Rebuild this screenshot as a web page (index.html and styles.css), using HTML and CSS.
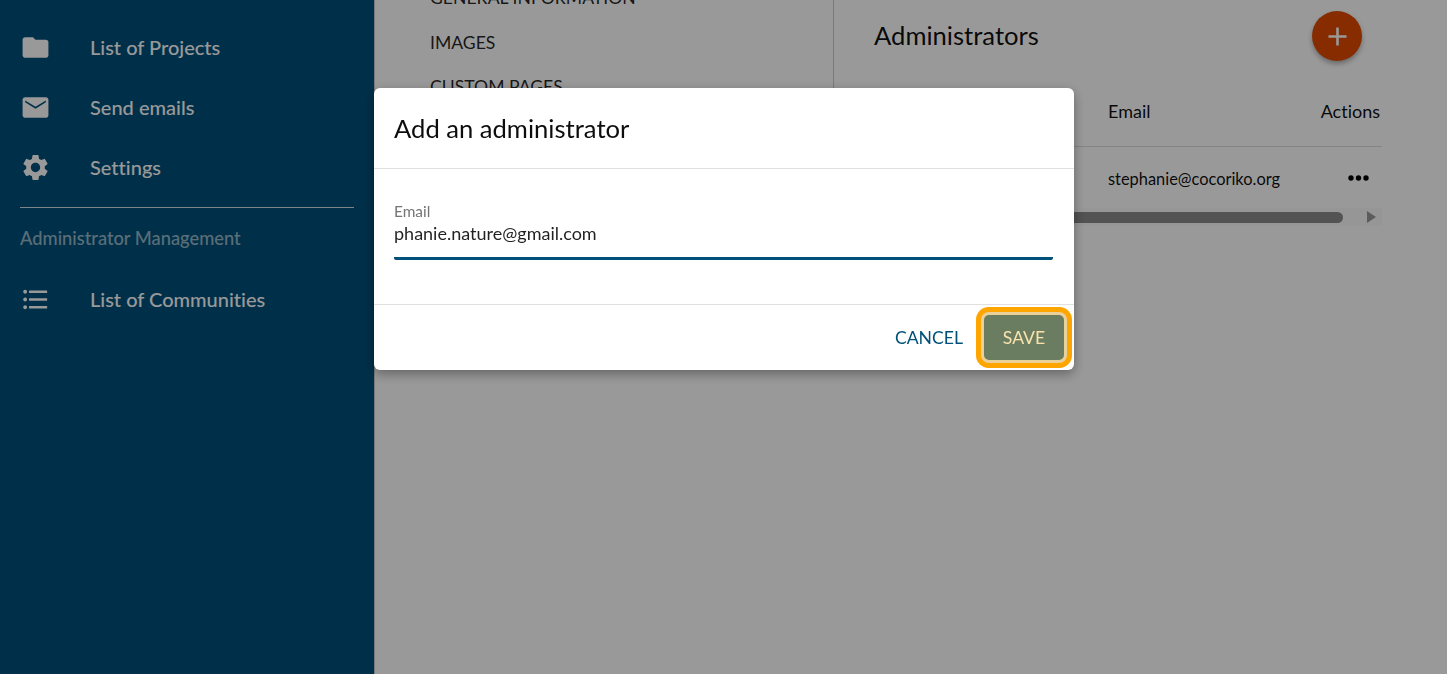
FILE: index.html
```html
<!DOCTYPE html>
<html lang="en">
<head>
    <meta charset="UTF-8">
    <meta name="viewport" content="width=device-width, initial-scale=1.0">
    <title>Add an administrator</title>
    <link rel="stylesheet" href="styles.css">
</head>
<body>
    <div class="layout">
        <nav class="sidebar">
            <a class="nav-item" href="#">
                <svg class="nav-icon" viewBox="0 0 24 24"><path d="M10 4H4c-1.1 0-1.99.9-1.99 2L2 18c0 1.1.9 2 2 2h16c1.1 0 2-.9 2-2V8c0-1.1-.9-2-2-2h-8l-2-2z"/></svg>
                List of Projects
            </a>
            <a class="nav-item" href="#">
                <svg class="nav-icon" viewBox="0 0 24 24"><path d="M20 4H4c-1.1 0-1.99.9-1.99 2L2 18c0 1.1.9 2 2 2h16c1.1 0 2-.9 2-2V6c0-1.1-.9-2-2-2zm0 4l-8 5-8-5V6.500l8 5 8-5V8z"/></svg>
                Send emails
            </a>
            <a class="nav-item" href="#">
                <svg class="nav-icon" viewBox="0 0 24 24"><path d="M19.14 12.94c.04-.3.06-.61.06-.94 0-.32-.02-.64-.07-.94l2.03-1.58c.18-.14.23-.41.12-.61l-1.92-3.32c-.12-.22-.37-.29-.59-.22l-2.39.96c-.5-.38-1.03-.7-1.62-.94l-.36-2.54c-.04-.24-.24-.41-.48-.41h-3.84c-.24 0-.43.17-.47.41l-.36 2.54c-.59.24-1.13.57-1.62.94l-2.39-.96c-.22-.08-.47 0-.59.22L2.74 8.87c-.12.21-.08.47.12.61l2.03 1.58c-.05.3-.09.63-.09.94s.02.64.07.94l-2.03 1.58c-.18.14-.23.41-.12.61l1.92 3.32c.12.22.37.29.59.22l2.39-.96c.5.38 1.03.7 1.62.94l.36 2.54c.05.24.24.41.48.41h3.84c.24 0 .44-.17.47-.41l.36-2.54c.59-.24 1.13-.56 1.62-.94l2.39.96c.22.08.47 0 .59-.22l1.92-3.32c.12-.22.07-.47-.12-.61l-2.01-1.58zM12 15.6c-1.98 0-3.6-1.62-3.6-3.6s1.62-3.6 3.6-3.6 3.6 1.62 3.6 3.6-1.62 3.6-3.6 3.6z"/></svg>
                Settings
            </a>
            <hr class="nav-divider">
            <div class="nav-heading">Administrator Management</div>
            <a class="nav-item" href="#">
                <svg class="nav-icon" viewBox="0 0 24 24"><path d="M4 10.500c-.83 0-1.500.67-1.500 1.500s.67 1.500 1.500 1.500 1.500-.67 1.500-1.500-.67-1.500-1.500-1.500zm0-6c-.83 0-1.500.67-1.500 1.500S3.170 7.500 4 7.500 5.500 6.830 5.500 6 4.830 4.500 4 4.500zm0 12c-.83 0-1.500.68-1.500 1.500s.68 1.500 1.500 1.500 1.500-.68 1.500-1.500-.67-1.500-1.500-1.500zM7 19h14v-2H7v2zm0-6h14v-2H7v2zm0-8v2h14V5H7z"/></svg>
                List of Communities
            </a>
        </nav>

        <main class="content">
            <div class="tabs">
                <div class="tab">GENERAL INFORMATION</div>
                <div class="tab">IMAGES</div>
                <div class="tab">CUSTOM PAGES</div>
            </div>
            <section class="admins">
                <div class="admins-head">
                    <h2 class="admins-title">Administrators</h2>
                    <button class="fab" type="button">
                        <svg viewBox="0 0 24 24"><path d="M19 13h-6v6h-2v-6H5v-2h6V5h2v6h6v2z"/></svg>
                    </button>
                </div>
                <div class="table">
                    <div class="table-row table-header">
                        <span class="col-email">Email</span>
                        <span class="col-actions">Actions</span>
                    </div>
                    <div class="table-row table-body">
                        <span class="col-email">stephanie@cocoriko.org</span>
                        <svg class="dots" viewBox="0 0 21 6"><circle cx="3" cy="3" r="2.7"/><circle cx="10.500" cy="3" r="2.7"/><circle cx="18" cy="3" r="2.7"/></svg>
                    </div>
                    <div class="scrollbar">
                        <div class="scroll-thumb"></div>
                        <div class="scroll-arrow"></div>
                    </div>
                </div>
            </section>
        </main>
    </div>

    <div class="overlay"></div>

    <div class="dialog">
        <div class="dialog-title">Add an administrator</div>
        <div class="dialog-body">
            <label class="field-label" for="email">Email</label>
            <input class="field-input" type="text" id="email" value="phanie.nature@gmail.com">
        </div>
        <div class="dialog-actions">
            <button class="btn-cancel" type="button">CANCEL</button>
            <button class="btn-save" type="button">SAVE</button>
        </div>
    </div>
</body>
</html>
```

FILE: styles.css
```css
html, body {
    height: 100%;
}

body {
    margin: 0;
    font-family: 'Lato', sans-serif;
    font-variant-ligatures: none;
    color: rgba(0, 0, 0, 0.87);
    background-color: white;
    overflow: hidden;
}

.layout {
    display: flex;
    height: 100%;
}

.sidebar {
    width: 374px;
    flex-shrink: 0;
    box-sizing: border-box;
    padding: 17px 20px 0;
    background-color: #00507a;
}

.nav-item {
    display: flex;
    align-items: center;
    height: 60px;
    color: white;
    font-size: 20px;
    font-weight: 500;
    text-decoration: none;
}

.nav-icon {
    width: 31px;
    height: 31px;
    margin-left: -0.5px;
    margin-right: 39.5px;
    fill: white;
}

.nav-divider {
    margin: 10px 0 0;
    border: none;
    border-top: 1px solid rgba(255, 255, 255, 0.8);
}

.nav-heading {
    height: 31px;
    margin-top: 15px;
    margin-bottom: 15px;
    font-size: 18.3px;
    font-weight: 500;
    line-height: 31px;
    color: rgba(255, 255, 255, 0.6);
}

.content {
    flex: 1;
    display: flex;
    align-items: flex-start;
    min-width: 0;
    border-left: 1px solid #ccc;
}

.tabs {
    width: 459px;
    height: 240px;
    flex-shrink: 0;
    box-sizing: border-box;
    margin-top: -24px;
    padding-left: 55px;
    border-right: 1px solid #ccc;
}

.tab {
    height: 44.5px;
    font-size: 17.6px;
    line-height: 44.5px;
}

.admins {
    width: 548px;
    box-sizing: border-box;
    padding-left: 40px;
}

.admins-head {
    display: flex;
    align-items: center;
    justify-content: space-between;
    height: 72px;
    padding-right: 20px;
}

.admins-title {
    margin: 0 0 2px;
    font-size: 25.6px;
    font-weight: 400;
    color: rgba(0, 0, 0, 0.95);
}

.fab {
    display: flex;
    align-items: center;
    justify-content: center;
    width: 50px;
    height: 50px;
    padding: 0;
    border: none;
    border-radius: 50%;
    background-color: #e04a00;
    box-shadow: 0 3px 5px rgba(0, 0, 0, 0.3);
}

.fab svg {
    width: 31px;
    height: 31px;
    fill: white;
}

.table {
    width: 508px;
}

.table-row {
    display: flex;
    align-items: center;
    justify-content: space-between;
    padding-left: 234px;
    padding-right: 2px;
    box-sizing: border-box;
    color: rgba(0, 0, 0, 0.95);
}

.table-header {
    height: 75px;
    padding-top: 4px;
    border-bottom: 1px solid #ddd;
    font-size: 18px;
}

.table-body {
    height: 61px;
    padding-top: 1px;
    font-size: 16.4px;
}

.dots {
    width: 21px;
    height: 6px;
    margin-right: 11px;
    fill: black;
}

.scrollbar {
    display: flex;
    align-items: center;
    justify-content: space-between;
    height: 18px;
    background-color: #fbfbfb;
}

.scroll-thumb {
    width: 469px;
    height: 11px;
    border-radius: 6px;
    background-color: #8a8a8a;
}

.scroll-arrow {
    width: 0;
    height: 0;
    margin-right: 6px;
    border-top: 6px solid transparent;
    border-bottom: 6px solid transparent;
    border-left: 9px solid #999;
}

.overlay {
    position: fixed;
    top: 0;
    left: 0;
    right: 0;
    bottom: 0;
    background-color: rgba(0, 0, 0, 0.4);
}

.dialog {
    position: fixed;
    top: 88px;
    left: 374px;
    width: 700px;
    background-color: white;
    border-radius: 6px;
    box-shadow: 0 4px 12px rgba(0, 0, 0, 0.35);
}

.dialog-title {
    height: 81px;
    box-sizing: border-box;
    padding-left: 20px;
    border-bottom: 1px solid #e0e0e0;
    font-size: 25.6px;
    line-height: 80px;
    color: rgba(0, 0, 0, 0.95);
}

.dialog-body {
    height: 136px;
    box-sizing: border-box;
    padding: 34px 21px 0 20px;
    border-bottom: 1px solid #e0e0e0;
}

.field-label {
    display: block;
    margin-bottom: -1px;
    font-size: 15.4px;
    line-height: 17px;
    color: #757575;
}

.field-input {
    display: block;
    width: 100%;
    box-sizing: border-box;
    height: 41px;
    padding: 0 0 11px;
    border: none;
    border-bottom: 3px solid #00507a;
    border-radius: 2px;
    outline: none;
    font-family: 'Lato', sans-serif;
    font-size: 18px;
    color: rgba(0, 0, 0, 0.87);
}

.dialog-actions {
    display: flex;
    align-items: center;
    justify-content: flex-end;
    gap: 21px;
    height: 65px;
    padding-right: 10px;
}

.btn-cancel {
    padding: 0;
    border: none;
    background: none;
    font-family: 'Lato', sans-serif;
    font-size: 17.6px;
    color: #00507a;
}

.btn-save {
    width: 80px;
    height: 45px;
    padding: 0;
    border: none;
    border-radius: 5px;
    box-shadow: 0 0 0 3px #e8d19b, 0 0 0 8px #ffa500;
    background-color: #6a7d60;
    font-family: 'Lato', sans-serif;
    font-size: 17.6px;
    color: #f8e3ae;
}
```
